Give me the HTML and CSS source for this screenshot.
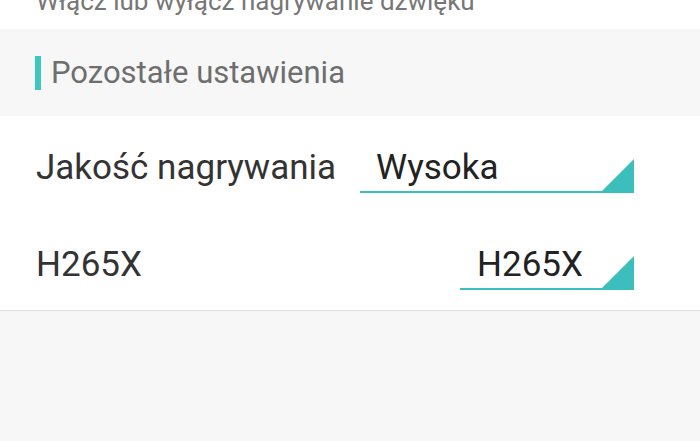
FILE: index.html
```
<!DOCTYPE html>
<html lang="pl">
<head>
	<meta charset="utf-8"/>
	<title>Ustawienia</title>
	<link rel="stylesheet" href="styles.css">
</head>
<body>

<div id="screen">
	<div class="group">
		<p class="hint">Włącz lub wyłącz nagrywanie dźwięku</p>
	</div>

	<div class="group-title">
		<span class="mark"></span>
		<h2>Pozostałe ustawienia</h2>
	</div>

	<div class="group last">
		<div class="row">
			<span class="label">Jakość nagrywania</span>
			<div class="select wide">Wysoka</div>
		</div>
		<div class="row">
			<span class="label">H265X</span>
			<div class="select narrow">H265X</div>
		</div>
	</div>
</div>

</body>
</html>
```

FILE: styles.css
```
body {
	background: #f7f7f7;
	color: #333;
	font-family: Roboto, 'Noto Sans', sans-serif;
	margin: 0;
	padding: 0;
}

#screen {
	margin-top: -26px;
}

.group {
	background: #fff;
}

.group.last {
	border-bottom: 1px solid #e0e0e0;
}

.hint {
	margin: 0;
	padding: 0 36px;
	font-size: 26px;
	line-height: 55px;
	color: #777;
}

.group-title {
	display: flex;
	align-items: center;
	height: 87px;
	padding: 0 35px;
}

.mark {
	width: 6px;
	height: 34px;
	background: #3cc8bf;
	margin-right: 10px;
}

.group-title h2 {
	margin: 0;
	font-size: 31px;
	font-weight: normal;
	color: #6e6e6e;
}

.row {
	display: flex;
	align-items: flex-end;
	height: 97px;
	padding: 0 66px 0 36px;
}

.label {
	font-size: 35px;
	line-height: 36px;
	padding-bottom: 27px;
}

.select {
	position: relative;
	font-size: 35px;
	line-height: 36px;
	padding: 0 0 5px 16px;
	margin-bottom: 20px;
	border-bottom: 2px solid #3cbfbc;
	color: #222;
}

.select.wide {
	flex: 1;
	margin-left: 24px;
}

.select.narrow {
	width: 157px;
	margin-left: auto;
	padding-left: 17px;
}

.select::after {
	content: "";
	position: absolute;
	right: 0;
	bottom: -2px;
	width: 0;
	height: 0;
	border-left: 34px solid transparent;
	border-bottom: 34px solid #3cbfbc;
}
```
